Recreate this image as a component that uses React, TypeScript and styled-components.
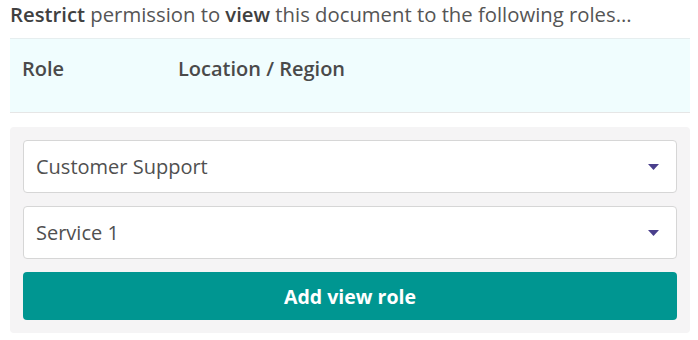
import styled, { createGlobalStyle } from "styled-components";

const GlobalStyle = createGlobalStyle`
  html, body {
    margin: 0;
    padding: 0;
    background: #ffffff;
    font-family: "Open Sans", "Liberation Sans", sans-serif;
    color: #4a4a4a;
  }
`;

const Wrapper = styled.div`
  padding: 2px 8px 0 10px;
`;

const Intro = styled.p`
  margin: 0 0 12px;
  font-size: 20.3px;
  line-height: 24px;
  color: #555555;
  white-space: nowrap;

  strong {
    font-weight: 600;
    color: #404040;
  }
`;

const TableHead = styled.div`
  display: grid;
  grid-template-columns: 156px 1fr;
  align-items: center;
  height: 75px;
  padding: 0 12px 14px;
  box-sizing: border-box;
  background: #f0fdfe;
  border-top: 1px solid #e6eeef;
  border-bottom: 1px solid #e6e6e6;
`;

const HeadCell = styled.span`
  font-size: 20px;
  font-weight: 600;
  color: #4a4a4a;
`;

const Panel = styled.div`
  display: flex;
  flex-direction: column;
  gap: 13px;
  margin-top: 14px;
  padding: 13px;
  background: #f5f4f5;
  border-radius: 4px;
`;

const SelectBox = styled.div`
  display: flex;
  align-items: center;
  justify-content: space-between;
  height: 53px;
  padding: 0 17px 0 12px;
  box-sizing: border-box;
  background: #ffffff;
  border: 1px solid #d6d6d6;
  border-radius: 4px;
  font-size: 20px;
  color: #505050;
`;

const Caret = styled.svg`
  width: 11px;
  height: 6px;
  fill: #4a3f8c;
`;

const AddButton = styled.button`
  height: 48px;
  border: none;
  border-radius: 4px;
  background: #009691;
  color: #ffffff;
  font-family: "Open Sans", "Liberation Sans", sans-serif;
  font-size: 19.5px;
  font-weight: 700;
  cursor: pointer;
`;

const Select = ({ value }: { value: string }) => (
  <SelectBox>
    <span>{value}</span>
    <Caret viewBox="0 0 11 6">
      <path d="M0 0h11L5.5 6z" />
    </Caret>
  </SelectBox>
);

export default function App() {
  return (
    <>
      <GlobalStyle />
      <Wrapper>
        <Intro>
          <strong>Restrict</strong> permission to <strong>view</strong> this document to the following roles...
        </Intro>
        <TableHead>
          <HeadCell>Role</HeadCell>
          <HeadCell>Location / Region</HeadCell>
        </TableHead>
        <Panel>
          <Select value="Customer Support" />
          <Select value="Service 1" />
          <AddButton type="button">Add view role</AddButton>
        </Panel>
      </Wrapper>
    </>
  );
}
